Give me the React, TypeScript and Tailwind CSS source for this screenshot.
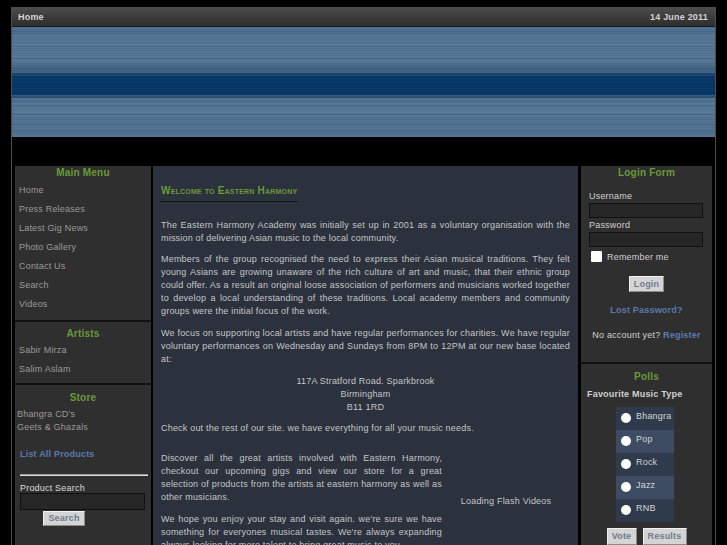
import React from "react";

function Banner() {
  const rows: React.ReactElement[] = [];
  for (let y = 0; y < 110; y++) {
    const h = Math.sin(y * 12.9898 + 3.1) * 43758.5453;
    const r = h - Math.floor(h);
    let base: number[];
    if (y < 38) base = [80, 112, 144];
    else if (y < 46) base = [70, 102, 134];
    else if (y < 49) base = [34, 74, 114];
    else if (y < 68) base = [8, 56, 102];
    else if (y < 71) base = [46, 84, 122];
    else base = [80, 112, 144];
    const amp = y >= 49 && y < 68 ? 8 : 18;
    const v = (r - 0.5) * amp;
    const c = base.map((x) => Math.round(Math.max(0, Math.min(255, x + v))));
    rows.push(
      <rect key={y} x={0} y={y} width={703} height={1} fill={`rgb(${c[0]},${c[1]},${c[2]})`} />
    );
  }
  return (
    <svg width="703" height="110" viewBox="0 0 703 110" className="block">
      {rows}
    </svg>
  );
}

function JLines({ lines, className = "" }: { lines: string[]; className?: string }) {
  return (
    <div className={className}>
      {lines.map((l, i) => (
        <div
          key={i}
          className={
            i < lines.length - 1
              ? "h-[13px] leading-[13px] text-justify [text-align-last:justify]"
              : "h-[13px] leading-[13px]"
          }
        >
          {l}
        </div>
      ))}
    </div>
  );
}

const Heading = ({ children }: { children: React.ReactNode }) => (
  <div className="text-center text-[10px] font-bold leading-[13px] tracking-[0.2px] text-[#6a9a3a]">{children}</div>
);

const btn =
  "bg-[#d4d4d4] border border-t-[#f0f0f0] border-l-[#f0f0f0] border-r-[#8a8a8a] border-b-[#8a8a8a] text-[#6e7c8e] font-bold text-[9px] leading-none flex items-center justify-center";

export default function App() {
  const menu = ["Home", "Press Releases", "Latest Gig News", "Photo Gallery", "Contact Us", "Search", "Videos"];
  const p1 = [
    "The Eastern Harmony Academy was initially set up in 2001 as a voluntary organisation with the",
    "mission of delivering Asian music to the local community.",
  ];
  const p2 = [
    "Members of the group recognised the need to express their Asian musical traditions. They felt",
    "young Asians are growing unaware of the rich culture of art and music, that their ethnic group",
    "could offer. As a result an original loose association of performers and musicians worked together",
    "to develop a local understanding of these traditions. Local academy members and community",
    "groups were the initial focus of the work.",
  ];
  const p3 = [
    "We focus on supporting local artists and have regular performances for charities. We have regular",
    "voluntary performances on Wednesday and Sundays from 8PM to 12PM at our new base located",
    "at:",
  ];
  const discover = [
    "Discover all the great artists involved with Eastern Harmony,",
    "checkout our upcoming gigs and view our store for a great",
    "selection of products from the artists at eastern harmony as well as",
    "other musicians.",
  ];
  const hope = [
    "We hope you enjoy your stay and visit again. we're sure we have",
    "something for everyones musical tastes. We're always expanding",
    "always looking for more talent to bring great music to you.",
  ];
  const polls = ["Bhangra", "Pop", "Rock", "Jazz", "RNB"];

  return (
    <div className="min-h-screen bg-black pt-[7px] font-['Liberation_Sans',Arial,sans-serif] tracking-[0.2px]">
      <div className="ml-[11px] w-[705px] border border-b-0 border-[#4c4c4c]">
        {/* top bar */}
        <div className="flex h-[19px] items-center justify-between border-b border-[#161616] bg-linear-to-b from-[#4c4c4c] to-[#2e2e2e] pl-[6px] pr-[7px] pt-[1px] text-[9px] font-bold text-[#d4d4d4]">
          <span>Home</span>
          <span>14 June 2011</span>
        </div>
        <Banner />
        <div className="h-[29px]" />

        {/* columns */}
        <div className="flex pl-[3px] text-[9px]">
          {/* left */}
          <div className="w-[136px] bg-[#2f2f2f] text-[#9a9a9a]">
            <div className="border-b-2 border-[#111] pb-[6px]">
              <Heading>Main Menu</Heading>
              <div className="pt-[2px] pl-[4px]">
                {menu.map((m) => (
                  <div key={m} className="h-[19px] leading-[19px]">
                    {m}
                  </div>
                ))}
              </div>
            </div>
            <div className="border-b-2 border-[#111] pt-[5px] pb-[4px]">
              <Heading>Artists</Heading>
              <div className="pt-[1px] pl-[4px]">
                {["Sabir Mirza", "Salim Aslam"].map((m) => (
                  <div key={m} className="h-[19px] leading-[19px]">
                    {m}
                  </div>
                ))}
              </div>
            </div>
            <div className="pt-[6px] pb-[30px]">
              <Heading>Store</Heading>
              <div className="mt-[4px] pl-[2px]">
                <div className="h-[13px] leading-[13px]">Bhangra CD's</div>
                <div className="h-[13px] leading-[13px]">Geets &amp; Ghazals</div>
              </div>
              <div className="mt-[14px] h-[13px] pl-[5px] font-bold leading-[13px] text-[#5a7aae]">List All Products</div>
              <div className="mt-[13px] ml-[5px] mr-[3px] h-[2px] border-t border-b border-t-[#9a9a9a] border-b-[#dcdcdc] bg-[#c4c4c4]" />
              <div className="mt-[6px] h-[11px] pl-[5px] leading-[13px] text-[#dcdcdc]">Product Search</div>
              <div className="ml-[5px] h-[17px] w-[125px] border border-[#111] bg-[#262626]" />
              <div className={`${btn} mt-[1px] ml-[28px] h-[15px] w-[42px]`}>Search</div>
            </div>
          </div>

          {/* center */}
          <div className="ml-[2px] w-[425px] bg-[#2b313d] px-[8px] pb-[10px] text-[#c6c6c6]">
            <div className="pt-[18px] -ml-[1px]">
              <span className="inline-block border-b border-[#111] px-[1px] pb-[4px] text-[10px] font-bold leading-[13px] text-[#6a9a3a] [font-variant:small-caps]">
                Welcome to Eastern Harmony
              </span>
            </div>
            <JLines lines={p1} className="mt-[17px]" />
            <JLines lines={p2} className="mt-[8px]" />
            <JLines lines={p3} className="mt-[9px]" />
            <div className="mt-[9px] text-center leading-[13px]">
              <div className="h-[13px]">117A Stratford Road. Sparkbrook</div>
              <div className="h-[13px]">Birmingham</div>
              <div className="h-[13px]">B11 1RD</div>
            </div>
            <div className="mt-[8px] h-[13px] leading-[13px]">
              Check out the rest of our site. we have everything for all your music needs.
            </div>
            <div className="mt-[17px] flex items-center">
              <div className="w-[281px]">
                <JLines lines={discover} />
                <JLines lines={hope} className="mt-[9px]" />
              </div>
              <div className="flex-1 text-center">Loading Flash Videos</div>
            </div>
          </div>

          {/* right */}
          <div className="ml-[3px] w-[131px] bg-[#2f2f2f] text-[#d0d0d0]">
            <div className="border-b-2 border-[#111] pb-[20px]">
              <Heading>Login Form</Heading>
              <div className="pl-[8px]">
                <div className="mt-[11px] h-[12px] leading-[12px]">Username</div>
                <div className="mt-[1px] h-[15px] w-[114px] border border-[#111] bg-[#262626]" />
                <div className="mt-[1px] h-[12px] leading-[12px]">Password</div>
                <div className="mt-[1px] h-[15px] w-[114px] border border-[#111] bg-[#262626]" />
              </div>
              <div className="mt-[4px] flex h-[11px] items-center pl-[10px]">
                <span className="h-[11px] w-[11px] rounded-[1px] bg-white" />
                <span className="ml-[5px] mt-[2px]">Remember me</span>
              </div>
              <div className="mt-[14px] flex justify-center">
                <div className={`${btn} h-[16px] w-[35px]`}>Login</div>
              </div>
              <div className="mt-[12px] h-[13px] text-center font-bold leading-[13px] text-[#5a7aae]">Lost Password?</div>
              <div className="mt-[12px] h-[13px] text-center leading-[13px]">
                No account yet? <span className="font-bold text-[#5a7aae]">Register</span>
              </div>
            </div>
            <div className="pt-[6px] pb-[20px]">
              <Heading>Polls</Heading>
              <div className="mt-[5px] h-[13px] pl-[6px] font-bold leading-[13px] text-[#d0d0d0]">Favourite Music Type</div>
              <div className="ml-[35px] mt-[6px] w-[58px]">
                {polls.map((p, i) => (
                  <div
                    key={p}
                    className={`flex items-start ${i === 4 ? "h-[23px]" : "h-[23px]"} ${
                      i % 2 === 0 ? "bg-[#2f3b4d]" : "bg-[#3d4c63]"
                    }`}
                  >
                    <span className="ml-[5px] mt-[6px] h-[10px] w-[10px] shrink-0 rounded-full bg-white" />
                    <span className="ml-[5px] mt-[3px] leading-[12px] text-[#d4d4d4]">{p}</span>
                  </div>
                ))}
              </div>
              <div className="mt-[6px] flex justify-center gap-[6px]">
                <div className={`${btn} h-[17px] w-[30px]`}>Vote</div>
                <div className={`${btn} h-[17px] w-[44px]`}>Results</div>
              </div>
            </div>
          </div>
        </div>
      </div>
    </div>
  );
}
